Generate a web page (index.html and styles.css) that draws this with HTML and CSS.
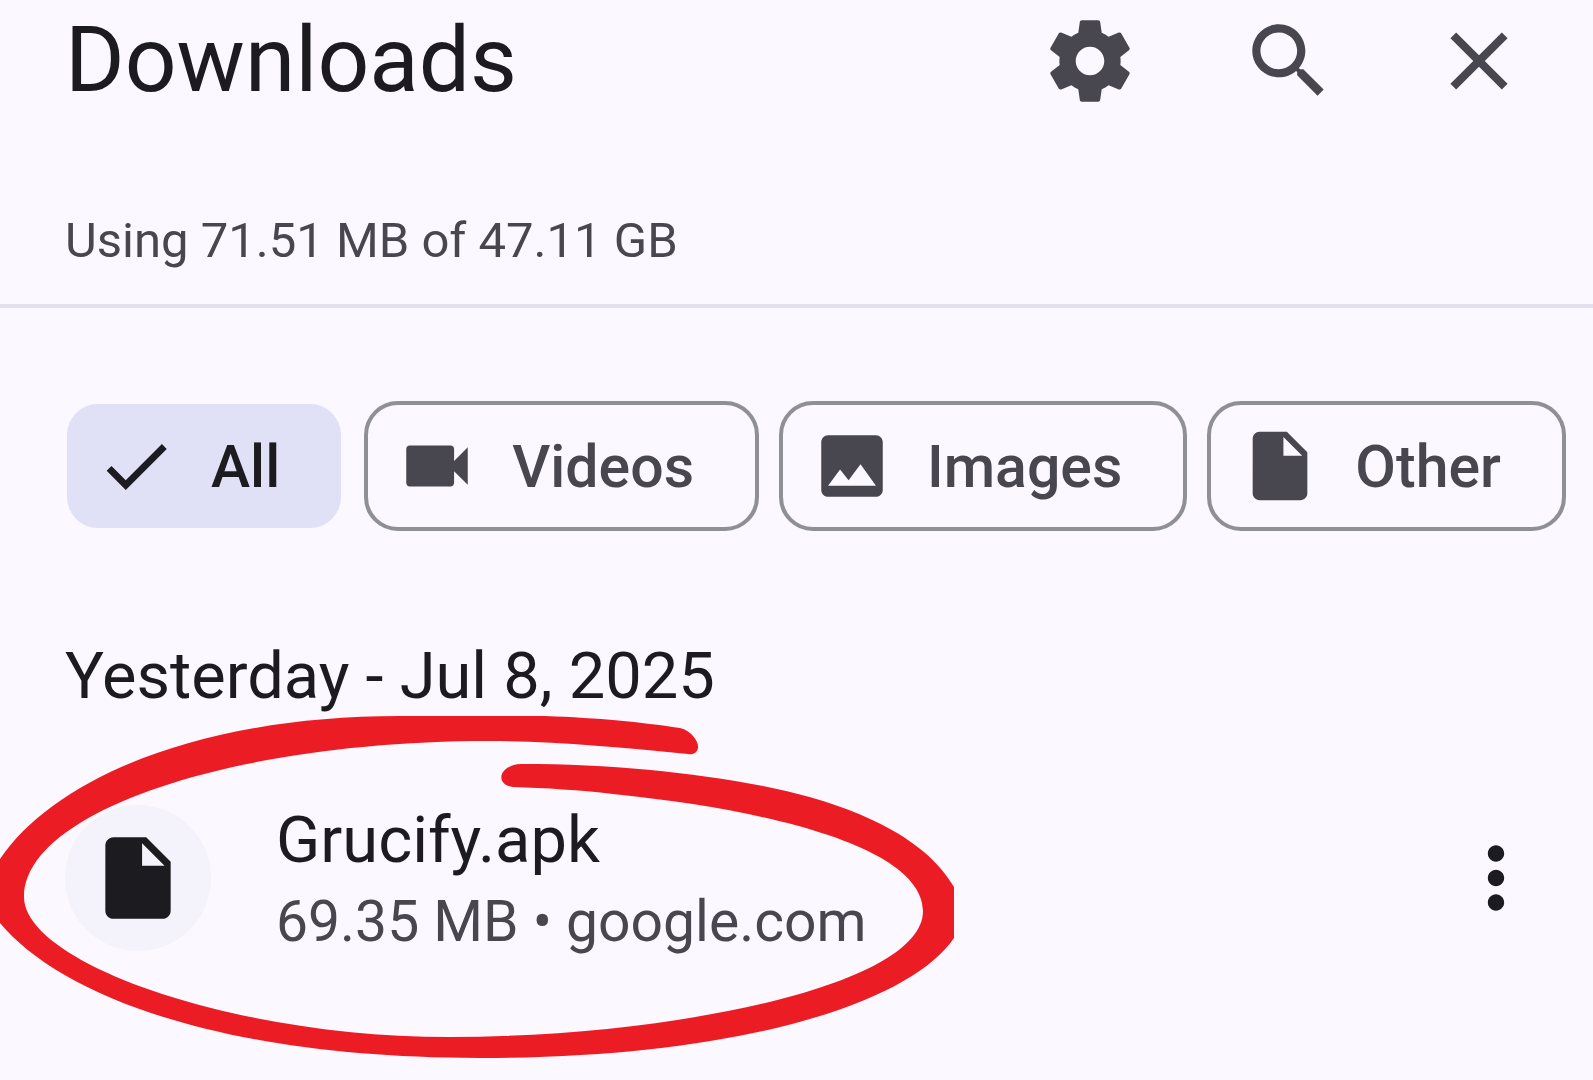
FILE: index.html
```html
<!DOCTYPE html>
<html lang="en">
<head>
    <meta charset="UTF-8" />
    <meta name="viewport" content="width=device-width, initial-scale=1" />
    <title>Downloads</title>
    <link rel="stylesheet" href="styles.css">
</head>
<body>
    <header class="top">
        <div class="toolbar">
            <h1 class="title">Downloads</h1>
            <div class="tools">
                <button type="button" class="icon-btn" aria-label="Settings">
                    <svg class="icon" viewBox="0 0 24 24"><path d="M19.43 12.98c.04-.32.07-.64.07-.98s-.03-.66-.07-.98l2.110-1.650c.19-.15.24-.42.12-.64l-2-3.460c-.12-.22-.39-.3-.61-.22l-2.490 1c-.52-.4-1.080-.73-1.690-.98l-.38-2.650C14.460 2.180 14.250 2 14 2h-4c-.25 0-.46.18-.49.42l-.38 2.650c-.61.25-1.170.59-1.690.98l-2.490-1c-.23-.09-.49 0-.61.22l-2 3.460c-.13.22-.07.49.12.64l2.110 1.650c-.04.32-.07.65-.07.98s.03.66.07.98l-2.110 1.650c-.19.15-.24.42-.12.64l2 3.460c.12.22.39.3.61.22l2.490-1c.52.4 1.080.73 1.690.98l.38 2.650c.03.24.24.42.49.42h4c.25 0 .46-.18.49-.42l.38-2.650c.61-.25 1.170-.59 1.690-.98l2.490 1c.23.09.49 0 .61-.22l2-3.460c.12-.22.07-.49-.12-.64l-2.110-1.650zM12 15.500c-1.930 0-3.500-1.570-3.500-3.500s1.570-3.500 3.500-3.500 3.500 1.570 3.500 3.500-1.570 3.500-3.500 3.500z"/></svg>
                </button>
                <button type="button" class="icon-btn" aria-label="Search">
                    <svg class="icon" viewBox="0 0 24 24"><path d="M15.5 14h-.79l-.28-.27C15.41 12.59 16 11.11 16 9.5 16 5.91 13.09 3 9.5 3S3 5.91 3 9.5 5.91 16 9.5 16c1.61 0 3.09-.59 4.23-1.57l.27.28v.79l5 4.99L20.49 19l-4.99-5zm-6 0C7.01 14 5 11.99 5 9.5S7.01 5 9.5 5 14 7.01 14 9.5 11.99 14 9.5 14z"/></svg>
                </button>
            </div>
            <button type="button" class="icon-btn" aria-label="Close">
                <svg class="icon" viewBox="0 0 24 24"><path d="M19 6.41L17.59 5 12 10.59 6.41 5 5 6.41 10.59 12 5 17.59 6.41 19 12 13.41 17.59 19 19 17.59 13.41 12z"/></svg>
            </button>
        </div>
        <p class="usage">Using 71.51 MB of 47.11 GB</p>
    </header>

    <main>
        <div class="chips">
            <button type="button" class="chip selected" aria-pressed="true">
                <svg class="chip-icon" viewBox="0 0 24 24"><path d="M9 16.17L4.83 12l-1.42 1.41L9 19 21 7l-1.41-1.41z"/></svg>
                All
            </button>
            <button type="button" class="chip">
                <svg class="chip-icon" viewBox="0 0 24 24"><path d="M17 10.5V7c0-.55-.45-1-1-1H4c-.55 0-1 .45-1 1v10c0 .55.45 1 1 1h12c.55 0 1-.45 1-1v-3.5l4 4v-11l-4 4z"/></svg>
                Videos
            </button>
            <button type="button" class="chip">
                <svg class="chip-icon" viewBox="0 0 24 24"><path fill-rule="evenodd" d="M5 3h14c1.1 0 2 .9 2 2v14c0 1.1-.9 2-2 2H5c-1.1 0-2-.9-2-2V5c0-1.1.9-2 2-2zM5 17.8h14l-4.5-6.3-3.5 4.7-2.500-3.200z"/></svg>
                Images
            </button>
            <button type="button" class="chip">
                <svg class="chip-icon" viewBox="0 0 24 24"><path d="M6 2c-1.1 0-1.99.9-1.99 2L4 20c0 1.1.89 2 1.99 2H18c1.1 0 2-.9 2-2V8l-6-6H6zm7 7V3.5L18.5 9H13z"/></svg>
                Other
            </button>
        </div>

        <section class="day">
            <h2 class="date">Yesterday - Jul 8, 2025</h2>
            <div class="item">
                <div class="thumb">
                    <svg class="icon" viewBox="0 0 24 24"><path d="M6 2c-1.1 0-1.99.9-1.99 2L4 20c0 1.1.89 2 1.99 2H18c1.1 0 2-.9 2-2V8l-6-6H6zm7 7V3.5L18.5 9H13z"/></svg>
                </div>
                <div class="details">
                    <p class="name">Grucify.apk</p>
                    <p class="meta">69.35 MB • google.com</p>
                </div>
                <button type="button" class="icon-btn" aria-label="More options">
                    <svg class="icon" viewBox="0 0 24 24"><path d="M12 8c1.1 0 2-.9 2-2s-.9-2-2-2-2 .9-2 2 .9 2 2 2zm0 2c-1.1 0-2 .9-2 2s.9 2 2 2 2-.9 2-2-.9-2-2-2zm0 6c-1.1 0-2 .9-2 2s.9 2 2 2 2-.9 2-2-.9-2-2-2z"/></svg>
                </button>
                <!-- hand drawn ring around the file -->
                <svg class="ring" viewBox="0 716 955 342" aria-hidden="true">
                    <path d="M688 754C620 747 550 741 490 741C233 741 24 811 24 897C24 962 230 1037 450 1037C670 1037 923 986 923 911C923 852 790 812 613 794C580 790 545 788 513 787C495 785 498 765 521 764C610 764 690 772 763 786C850 803 925 836 954 887V938C910 1003 740 1058 480 1058C220 1058 60 995 0 923V859C55 778 200 716 400 716H545C600 718 640 722 680 728C692 731 699 742 698 748C697 753 693 755 688 754Z"/>
                </svg>
            </div>
        </section>
    </main>
</body>
</html>
```
FILE: styles.css
```css
* {
    margin: 0; padding: 0; box-sizing: border-box;
}
body {
    min-height: 100vh;
    background-color: #fbf8ff;
    color: #1c1b20;
    font-family: Roboto, 'Liberation Sans', sans-serif;
    white-space: nowrap;
}
button {
    background: none;
    border: none;
    color: inherit;
    font-family: inherit;
    cursor: pointer;
}
.top {
    border-bottom: 4px solid #e4e1ec;
    padding: 0 65px 33px;
}
.toolbar {
    display: flex;
    align-items: center;
    gap: 92px;
    color: #48464f;
}
.title {
    flex: 1;
    color: #1c1b20;
    font-size: 91px;
    font-weight: 400;
    line-height: 121px;
}
.tools {
    display: flex;
    gap: 101px;
}
.icon-btn {
    display: flex;
}
.icon {
    width: 98px;
    height: 98px;
    fill: currentColor;
}
.usage {
    margin-top: 90px;
    color: #48464f;
    font-size: 49px;
    line-height: 60px;
}
.chips {
    display: flex;
    gap: 20px;
    padding: 93px 16px 0 64px;
}
.chip {
    display: flex;
    align-items: center;
    gap: 34px;
    height: 130px;
    padding: 0 61px 0 28px;
    border: 4px solid #8f9096;
    border-radius: 34px;
    color: #48464f;
    font-size: 59px;
    font-weight: 500;
}
.chip.selected {
    background: #e0e0f7 padding-box;
    border: 3px solid transparent;
    color: #1c1b20;
}
.chip-icon {
    width: 82px;
    height: 82px;
    fill: currentColor;
}
.day {
    margin-top: 105px;
}
.date {
    padding: 0 65px;
    font-size: 65px;
    font-weight: 400;
    line-height: 80px;
}
.item {
    position: relative;
    display: flex;
    align-items: center;
    gap: 65px;
    margin: 77px 0 117px;
    padding: 0 48px 0 65px;
}
.thumb {
    display: flex;
    align-items: center;
    justify-content: center;
    width: 146px;
    height: 146px;
    border-radius: 50%;
    background-color: #f4f2fa;
}
.details {
    flex: 1;
    padding-top: 6px;
    line-height: 82px;
}
.name {
    font-size: 65px;
}
.meta {
    color: #48464f;
    font-size: 57px;
}
.ring {
    position: absolute;
    left: 0;
    top: -77px;
    width: 955px;
    height: 342px;
    fill: #ec1c24;
    pointer-events: none;
}
```
